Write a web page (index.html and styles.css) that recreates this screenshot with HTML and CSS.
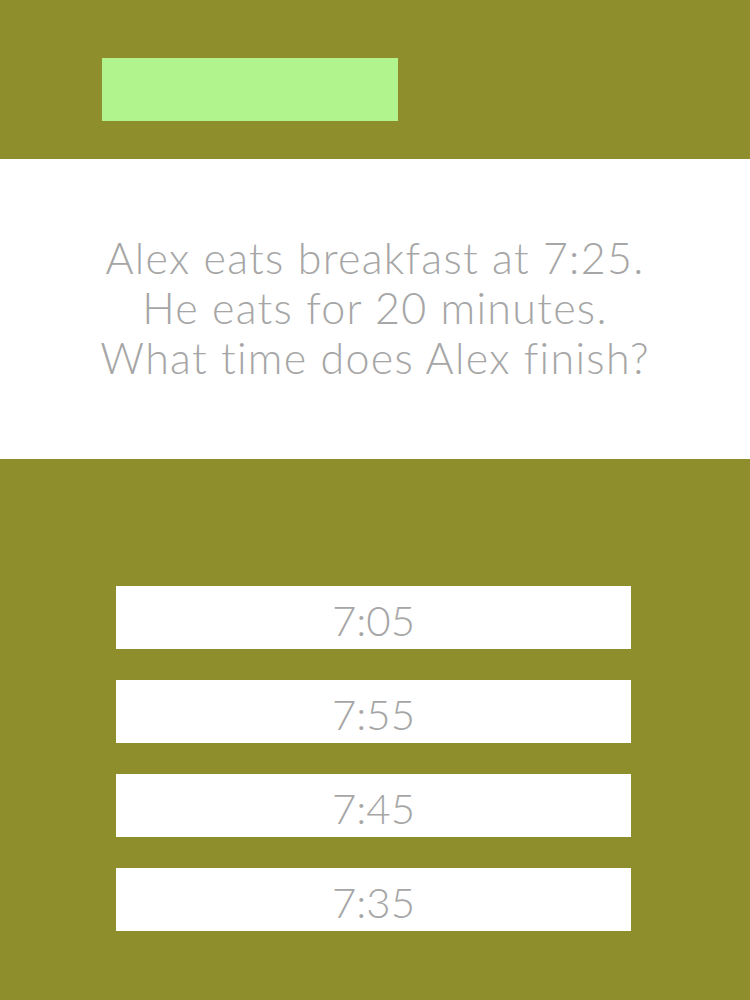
FILE: index.html
```html
<!DOCTYPE html>
<html lang="en">
<head>
    <meta charset="UTF-8">
    <title>Quiz</title>
    <link rel="stylesheet" href="styles.css">
</head>
<body>
    <div class="top">
        <div class="progress"></div>
    </div>

    <div class="question">
        <p>Alex eats breakfast at 7:25.<br>He eats for 20 minutes.<br>What time does Alex finish?</p>
    </div>

    <div class="answers">
        <button>7:05</button>
        <button>7:55</button>
        <button>7:45</button>
        <button>7:35</button>
    </div>
</body>
</html>
```

FILE: styles.css
```css
body {
    margin: 0;
    background-color: #8e8e2d;
    font-family: Lato, "Open Sans", sans-serif;
    font-weight: 300;
    color: #a6a6a6;
}

.top {
    height: 159px;
    box-sizing: border-box;
    padding: 58px 0 0 102px;
}

.progress {
    width: 296px;
    height: 63px;
    background-color: #b1f48e;
}

.question {
    height: 300px;
    background-color: #fff;
    display: flex;
    align-items: center;
    justify-content: center;
    text-align: center;
}

.question p {
    margin: 0;
    font-size: 43px;
    line-height: 50px;
    letter-spacing: 1.3px;
    padding-bottom: 2px;
}

.answers {
    display: flex;
    flex-direction: column;
    gap: 31px;
    padding: 127px 0 0 116px;
}

.answers button {
    width: 515px;
    height: 63px;
    border: none;
    background-color: #fff;
    font-family: inherit;
    font-weight: 300;
    font-size: 42px;
    color: #a6a6a6;
    padding: 5px 0 0;
    cursor: pointer;
}
```
